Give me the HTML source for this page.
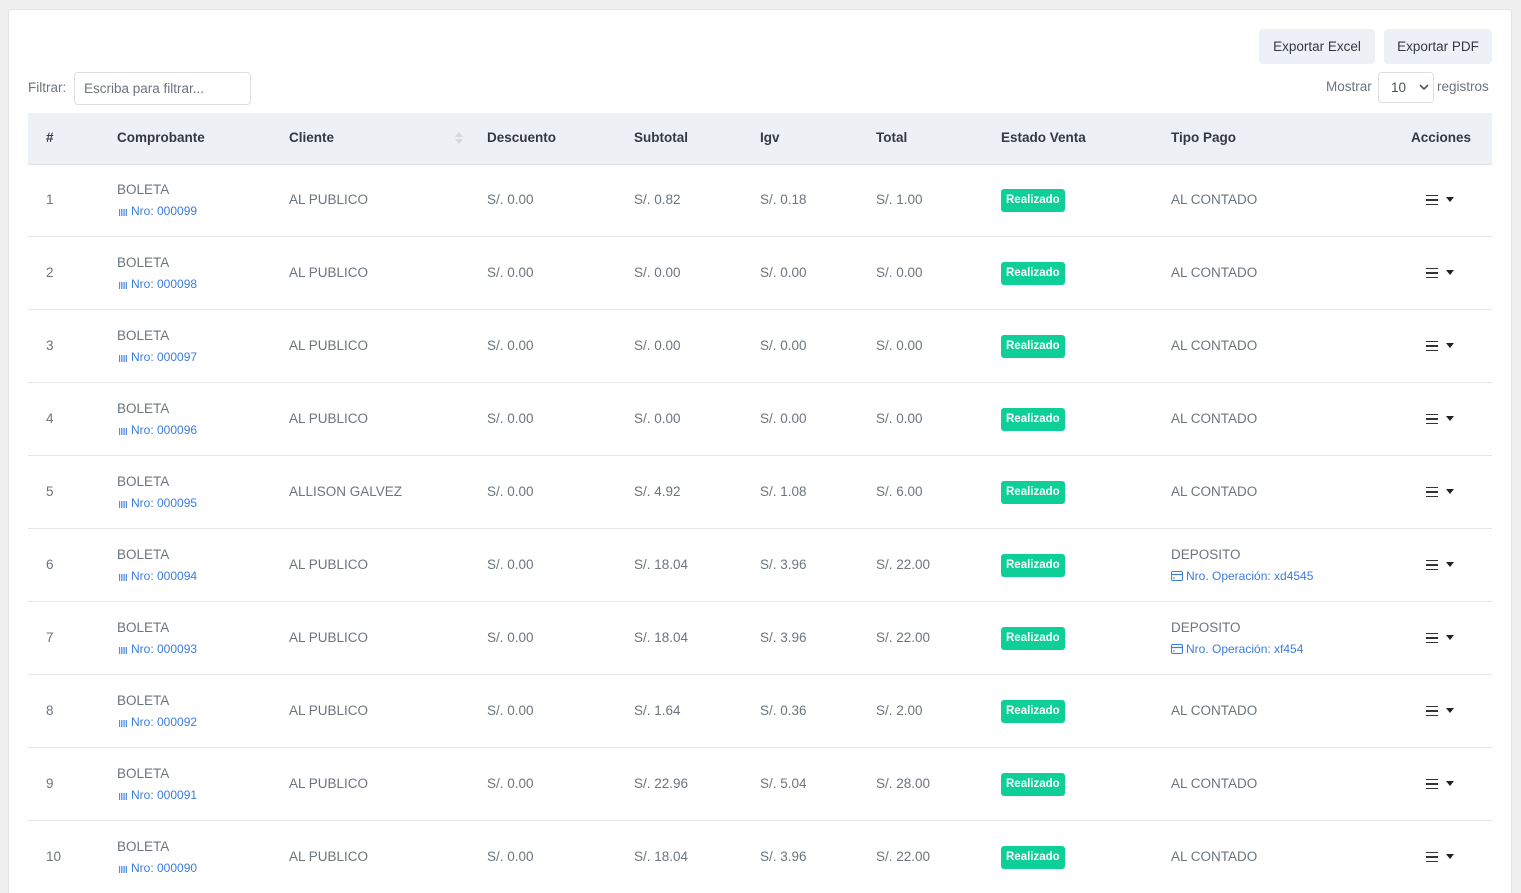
<!DOCTYPE html>
<html><head><meta charset="utf-8"><style>
*{box-sizing:border-box;margin:0;padding:0}
html,body{width:1521px;height:893px;overflow:hidden}
body{background:#f0f0f0;font-family:"Liberation Sans",sans-serif;font-size:13.5px;color:#6c757d;position:relative}
.card{position:absolute;left:8px;top:9px;width:1504px;height:900px;background:#fff;border:1px solid #e3e3e3;border-radius:4px}
.abs{position:absolute;white-space:nowrap}
.btn{position:absolute;top:29px;height:35px;background:#edf0f5;border-radius:4px;color:#343a40;font-size:13.5px;line-height:35px;text-align:center}
.thead{position:absolute;left:28px;top:113px;width:1464px;height:52px;background:#edf0f5;border-bottom:1px solid #dee2e6}
.th{position:absolute;top:130px;font-weight:bold;color:#343a40;font-size:13.5px}
.row{position:absolute;left:28px;width:1464px;height:73px;border-bottom:1px solid #e5e7ea}
.c{position:absolute;top:28px;white-space:nowrap}
.b1{position:absolute;top:18px;white-space:nowrap}
.b2{position:absolute;top:40px;font-size:12px;color:#3b7ddd;white-space:nowrap}
.b2 svg{vertical-align:-1px;margin-right:3px}
.badge{position:absolute;top:25px;left:973px;background:#0dcf97;color:#fff;font-weight:bold;font-size:11.5px;padding:0 5px;height:23px;line-height:23px;border-radius:3px}
.ham{position:absolute;left:1398px;top:31px;width:12px;height:10px;border-top:1.5px solid #333;border-bottom:1.5px solid #333}
.ham:after{content:"";position:absolute;left:0;top:3px;width:12px;height:1.5px;background:#333}
.car{position:absolute;left:1418px;top:33px;border-left:4.5px solid transparent;border-right:4.5px solid transparent;border-top:5px solid #222}
</style></head><body>
<svg width="0" height="0" style="position:absolute"><defs>
<symbol id="bc" viewBox="0 0 10 8"><path d="M0.5 0v8M2.5 0v8M4.5 0v8M6.5 0v8M8.5 0v8" stroke="#3b7ddd" stroke-width="1"/></symbol>
<symbol id="cc" viewBox="0 0 12 10"><rect x="0.5" y="0.5" width="11" height="9" rx="1.5" fill="none" stroke="#3b7ddd"/><path d="M0.5 3.5h11" stroke="#3b7ddd" stroke-width="1.2"/><path d="M2 7h2" stroke="#3b7ddd"/></symbol>
</defs></svg>
<div class="card"></div>
<div class="btn" style="left:1259px;width:116px">Exportar Excel</div>
<div class="btn" style="left:1384px;width:108px">Exportar PDF</div>
<div class="abs" style="left:28px;top:80px">Filtrar:</div>
<div class="abs" style="left:74px;top:72px;width:177px;height:33px;border:1px solid #dcdfe3;border-radius:4px;padding-left:9px;line-height:31px;color:#6c757d">Escriba para filtrar...</div>
<div class="abs" style="left:1326px;top:79px">Mostrar</div>
<div class="abs" style="left:1378px;top:72px;width:56px;height:31px;border:1px solid #dcdfe3;border-radius:4px;padding-left:12px;line-height:29px;color:#495057">10<svg style="position:absolute;left:40px;top:11px" width="10" height="7" viewBox="0 0 10 7"><path d="M1 1l4 4 4-4" stroke="#555" stroke-width="1.6" fill="none"/></svg></div>
<div class="abs" style="left:1437px;top:79px">registros</div>
<div class="thead"></div>
<div class="th" style="left:46px">#</div>
<div class="th" style="left:117px">Comprobante</div>
<div class="th" style="left:289px">Cliente</div>
<svg class="abs" style="left:455px;top:131px" width="8" height="14" viewBox="0 0 8 14"><path d="M0 6L4 1 8 6z M0 8L4 13 8 8z" fill="#d5d8dc"/></svg>
<div class="th" style="left:487px">Descuento</div>
<div class="th" style="left:634px">Subtotal</div>
<div class="th" style="left:760px">Igv</div>
<div class="th" style="left:876px">Total</div>
<div class="th" style="left:1001px">Estado Venta</div>
<div class="th" style="left:1171px">Tipo Pago</div>
<div class="th" style="left:1411px">Acciones</div>
<div class="row" style="top:164px"><div class="c" style="left:18px">1</div><div class="b1" style="left:89px">BOLETA</div><div class="b2" style="left:91px"><svg width="9" height="7"><use href="#bc"/></svg>Nro: 000099</div><div class="c" style="left:261px">AL PUBLICO</div><div class="c" style="left:459px">S/. 0.00</div><div class="c" style="left:606px">S/. 0.82</div><div class="c" style="left:732px">S/. 0.18</div><div class="c" style="left:848px">S/. 1.00</div><div class="badge">Realizado</div><div class="c" style="left:1143px">AL CONTADO</div><div class="ham"></div><div class="car"></div></div>
<div class="row" style="top:237px"><div class="c" style="left:18px">2</div><div class="b1" style="left:89px">BOLETA</div><div class="b2" style="left:91px"><svg width="9" height="7"><use href="#bc"/></svg>Nro: 000098</div><div class="c" style="left:261px">AL PUBLICO</div><div class="c" style="left:459px">S/. 0.00</div><div class="c" style="left:606px">S/. 0.00</div><div class="c" style="left:732px">S/. 0.00</div><div class="c" style="left:848px">S/. 0.00</div><div class="badge">Realizado</div><div class="c" style="left:1143px">AL CONTADO</div><div class="ham"></div><div class="car"></div></div>
<div class="row" style="top:310px"><div class="c" style="left:18px">3</div><div class="b1" style="left:89px">BOLETA</div><div class="b2" style="left:91px"><svg width="9" height="7"><use href="#bc"/></svg>Nro: 000097</div><div class="c" style="left:261px">AL PUBLICO</div><div class="c" style="left:459px">S/. 0.00</div><div class="c" style="left:606px">S/. 0.00</div><div class="c" style="left:732px">S/. 0.00</div><div class="c" style="left:848px">S/. 0.00</div><div class="badge">Realizado</div><div class="c" style="left:1143px">AL CONTADO</div><div class="ham"></div><div class="car"></div></div>
<div class="row" style="top:383px"><div class="c" style="left:18px">4</div><div class="b1" style="left:89px">BOLETA</div><div class="b2" style="left:91px"><svg width="9" height="7"><use href="#bc"/></svg>Nro: 000096</div><div class="c" style="left:261px">AL PUBLICO</div><div class="c" style="left:459px">S/. 0.00</div><div class="c" style="left:606px">S/. 0.00</div><div class="c" style="left:732px">S/. 0.00</div><div class="c" style="left:848px">S/. 0.00</div><div class="badge">Realizado</div><div class="c" style="left:1143px">AL CONTADO</div><div class="ham"></div><div class="car"></div></div>
<div class="row" style="top:456px"><div class="c" style="left:18px">5</div><div class="b1" style="left:89px">BOLETA</div><div class="b2" style="left:91px"><svg width="9" height="7"><use href="#bc"/></svg>Nro: 000095</div><div class="c" style="left:261px">ALLISON GALVEZ</div><div class="c" style="left:459px">S/. 0.00</div><div class="c" style="left:606px">S/. 4.92</div><div class="c" style="left:732px">S/. 1.08</div><div class="c" style="left:848px">S/. 6.00</div><div class="badge">Realizado</div><div class="c" style="left:1143px">AL CONTADO</div><div class="ham"></div><div class="car"></div></div>
<div class="row" style="top:529px"><div class="c" style="left:18px">6</div><div class="b1" style="left:89px">BOLETA</div><div class="b2" style="left:91px"><svg width="9" height="7"><use href="#bc"/></svg>Nro: 000094</div><div class="c" style="left:261px">AL PUBLICO</div><div class="c" style="left:459px">S/. 0.00</div><div class="c" style="left:606px">S/. 18.04</div><div class="c" style="left:732px">S/. 3.96</div><div class="c" style="left:848px">S/. 22.00</div><div class="badge">Realizado</div><div class="b1" style="left:1143px">DEPOSITO</div><div class="b2" style="left:1143px"><svg width="12" height="10"><use href="#cc"/></svg>Nro. Operación: xd4545</div><div class="ham"></div><div class="car"></div></div>
<div class="row" style="top:602px"><div class="c" style="left:18px">7</div><div class="b1" style="left:89px">BOLETA</div><div class="b2" style="left:91px"><svg width="9" height="7"><use href="#bc"/></svg>Nro: 000093</div><div class="c" style="left:261px">AL PUBLICO</div><div class="c" style="left:459px">S/. 0.00</div><div class="c" style="left:606px">S/. 18.04</div><div class="c" style="left:732px">S/. 3.96</div><div class="c" style="left:848px">S/. 22.00</div><div class="badge">Realizado</div><div class="b1" style="left:1143px">DEPOSITO</div><div class="b2" style="left:1143px"><svg width="12" height="10"><use href="#cc"/></svg>Nro. Operación: xf454</div><div class="ham"></div><div class="car"></div></div>
<div class="row" style="top:675px"><div class="c" style="left:18px">8</div><div class="b1" style="left:89px">BOLETA</div><div class="b2" style="left:91px"><svg width="9" height="7"><use href="#bc"/></svg>Nro: 000092</div><div class="c" style="left:261px">AL PUBLICO</div><div class="c" style="left:459px">S/. 0.00</div><div class="c" style="left:606px">S/. 1.64</div><div class="c" style="left:732px">S/. 0.36</div><div class="c" style="left:848px">S/. 2.00</div><div class="badge">Realizado</div><div class="c" style="left:1143px">AL CONTADO</div><div class="ham"></div><div class="car"></div></div>
<div class="row" style="top:748px"><div class="c" style="left:18px">9</div><div class="b1" style="left:89px">BOLETA</div><div class="b2" style="left:91px"><svg width="9" height="7"><use href="#bc"/></svg>Nro: 000091</div><div class="c" style="left:261px">AL PUBLICO</div><div class="c" style="left:459px">S/. 0.00</div><div class="c" style="left:606px">S/. 22.96</div><div class="c" style="left:732px">S/. 5.04</div><div class="c" style="left:848px">S/. 28.00</div><div class="badge">Realizado</div><div class="c" style="left:1143px">AL CONTADO</div><div class="ham"></div><div class="car"></div></div>
<div class="row" style="top:821px"><div class="c" style="left:18px">10</div><div class="b1" style="left:89px">BOLETA</div><div class="b2" style="left:91px"><svg width="9" height="7"><use href="#bc"/></svg>Nro: 000090</div><div class="c" style="left:261px">AL PUBLICO</div><div class="c" style="left:459px">S/. 0.00</div><div class="c" style="left:606px">S/. 18.04</div><div class="c" style="left:732px">S/. 3.96</div><div class="c" style="left:848px">S/. 22.00</div><div class="badge">Realizado</div><div class="c" style="left:1143px">AL CONTADO</div><div class="ham"></div><div class="car"></div></div>
</body></html>
